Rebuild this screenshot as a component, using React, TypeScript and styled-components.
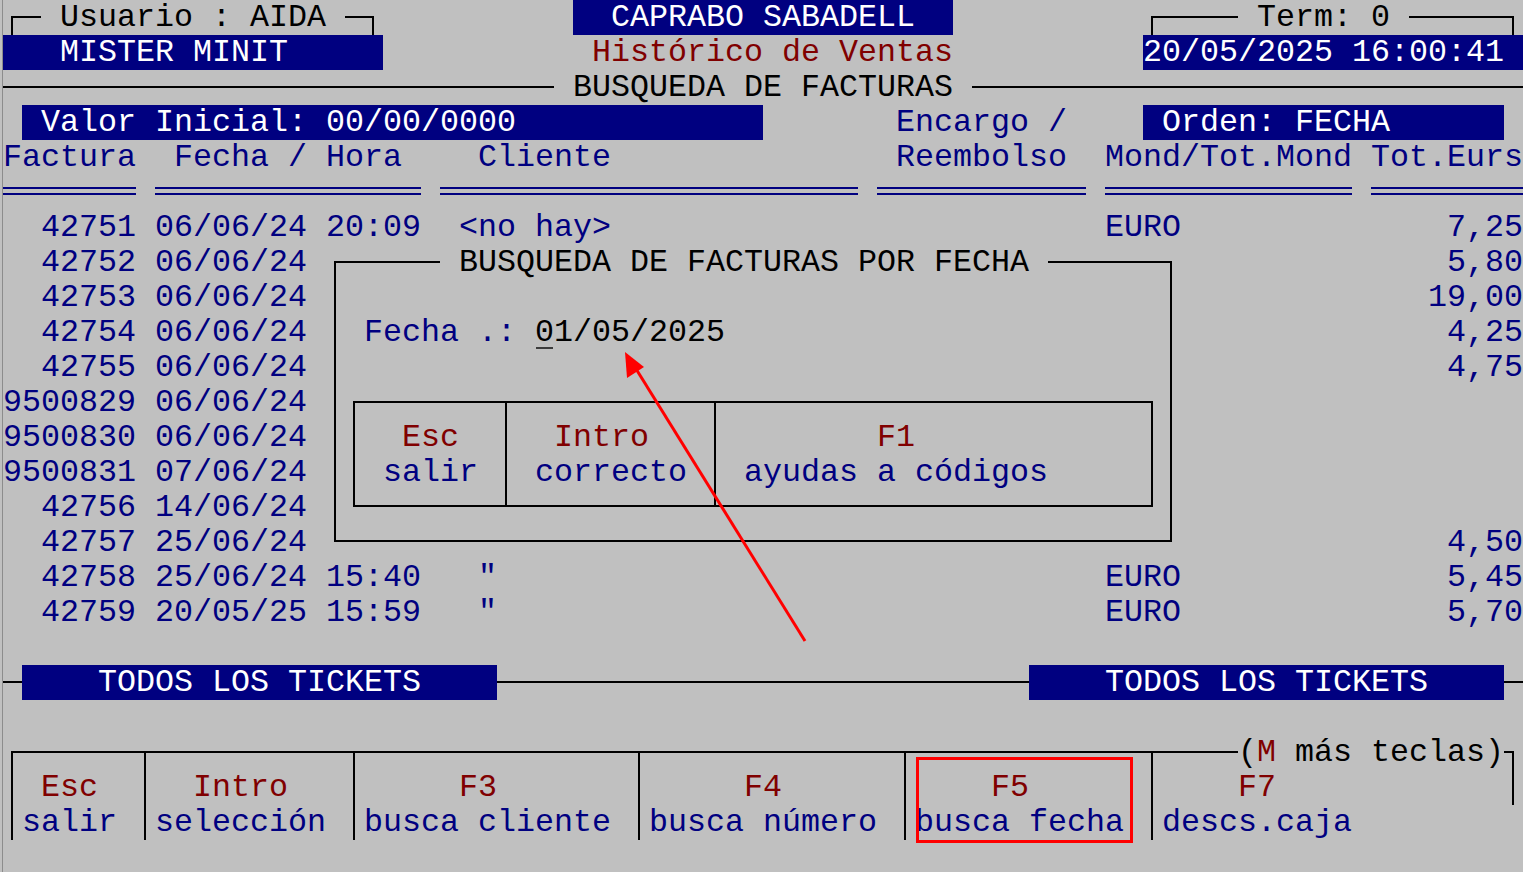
import React from "react";
import styled, { createGlobalStyle, css } from "styled-components";

const BLUE = "#000080";
const RED = "#800000";
const GRAY = "#c0c0c0";
const INK = "#000000";

type Tone = "blue" | "red" | "black" | "white";
const toneColor: Record<Tone, string> = {
  blue: BLUE,
  red: RED,
  black: INK,
  white: "#ffffff",
};

const Global = createGlobalStyle`
  html, body { margin: 0; padding: 0; background: ${GRAY}; }
  #root { width: 1523px; height: 872px; overflow: hidden; }
`;

type Place = { $c: number; $r: number; $w?: number; $h?: number };

const place = css<Place>`
  grid-column: ${(p) => p.$c + 1} / span ${(p) => p.$w ?? 1};
  grid-row: ${(p) => p.$r + 1} / span ${(p) => p.$h ?? 1};
`;

const cellGrid = (cols: number, rows: number) => css`
  display: grid;
  grid-template-columns: repeat(${cols}, 19px);
  grid-template-rows: repeat(${rows}, 35px);
`;

const cellText = css`
  box-sizing: border-box;
  height: 35px;
  padding-top: 1px;
  line-height: 35px;
  white-space: pre;
`;

const Screen = styled.div`
  ${cellGrid(80, 25)};
  position: relative;
  width: 1523px;
  height: 872px;
  padding-left: 3px;
  box-sizing: border-box;
  background: ${GRAY};
  overflow: hidden;
  font-family: "Liberation Mono", "DejaVu Sans Mono", monospace;
  font-size: 31.66px;
  line-height: 35px;
  white-space: pre;
  box-shadow: inset 2px 0 0 ${GRAY}, inset 3px 0 0 #8c8c8c;
`;

const Text = styled.div<Place & { $tone?: Tone; $align?: "left" | "right" }>`
  ${place};
  ${cellText};
  color: ${(p) => toneColor[p.$tone ?? "blue"]};
  text-align: ${(p) => p.$align ?? "left"};
  z-index: 1;
`;

const Legend = styled.div<Place & { $tone?: Tone }>`
  ${place};
  ${cellText};
  color: ${(p) => toneColor[p.$tone ?? "black"]};
  background: ${GRAY};
  z-index: 2;
`;

const Hotkey = styled.span`
  color: ${RED};
`;

const Bar = styled.div<Place>`
  ${place};
  ${cellText};
  background: ${BLUE};
  color: #ffffff;
  z-index: 2;
`;

const Rule = styled.div<Place & { $tone?: Tone }>`
  ${place};
  align-self: start;
  margin-top: 16px;
  height: 2px;
  background: ${(p) => toneColor[p.$tone ?? "black"]};
`;

const DoubleRule = styled.div<Place>`
  ${place};
  align-self: start;
  margin-top: 12px;
  height: 8px;
  box-sizing: border-box;
  border-top: 2px solid ${BLUE};
  border-bottom: 2px solid ${BLUE};
`;

const Frame = styled.div<Place & { $openBottom?: boolean; $openRight?: boolean }>`
  ${place};
  margin: 16px 9px ${(p) => (p.$openBottom ? "0" : "18px")} 8px;
  border: 2px solid ${INK};
  border-bottom-width: ${(p) => (p.$openBottom ? 0 : 2)}px;
  border-right-width: ${(p) => (p.$openRight ? 0 : 2)}px;
  box-sizing: border-box;
`;

const VLine = styled.div<Place & { $fromMid?: boolean; $toMid?: boolean }>`
  ${place};
  justify-self: start;
  width: 2px;
  margin-left: 8px;
  margin-top: ${(p) => (p.$fromMid ? 16 : 0)}px;
  margin-bottom: ${(p) => (p.$toMid ? 18 : 0)}px;
  background: ${INK};
`;

const Dialog = styled.div<Place>`
  ${place};
  ${cellGrid(45, 9)};
  background: ${GRAY};
  z-index: 3;
`;

const Cursor = styled.div<Place>`
  ${place};
  align-self: start;
  justify-self: start;
  margin-top: 32px;
  margin-left: 1px;
  width: 17px;
  height: 2px;
  background: #3c3c3c;
  z-index: 2;
`;

const KeyBar = styled.div<Place>`
  ${place};
  ${cellGrid(80, 3)};
`;

const Annotation = styled.svg`
  position: absolute;
  left: 0;
  top: 0;
  width: 1523px;
  height: 872px;
  pointer-events: none;
  z-index: 10;
`;

type Row = {
  num: string;
  date: string;
  time?: string;
  client?: string;
  clientCol?: number;
  money?: string;
  total?: string;
};

const rows: Row[] = [
  { num: "42751", date: "06/06/24", time: "20:09", client: "<no hay>", clientCol: 24, money: "EURO", total: "7,25" },
  { num: "42752", date: "06/06/24", total: "5,80" },
  { num: "42753", date: "06/06/24", total: "19,00" },
  { num: "42754", date: "06/06/24", total: "4,25" },
  { num: "42755", date: "06/06/24", total: "4,75" },
  { num: "9500829", date: "06/06/24" },
  { num: "9500830", date: "06/06/24" },
  { num: "9500831", date: "07/06/24" },
  { num: "42756", date: "14/06/24" },
  { num: "42757", date: "25/06/24", total: "4,50" },
  { num: "42758", date: "25/06/24", time: "15:40", client: "\"", clientCol: 25, money: "EURO", total: "5,45" },
  { num: "42759", date: "20/05/25", time: "15:59", client: "\"", clientCol: 25, money: "EURO", total: "5,70" },
];

const rules: [number, number][] = [
  [0, 7],
  [8, 14],
  [23, 22],
  [46, 11],
  [58, 13],
  [72, 8],
];

const keys = [
  { kc: 2, key: "Esc", dc: 1, desc: "salir" },
  { kc: 10, key: "Intro", dc: 8, desc: "selección" },
  { kc: 24, key: "F3", dc: 19, desc: "busca cliente" },
  { kc: 39, key: "F4", dc: 34, desc: "busca número" },
  { kc: 52, key: "F5", dc: 48, desc: "busca fecha" },
  { kc: 65, key: "F7", dc: 61, desc: "descs.caja" },
];

const keyDividers = [7, 18, 33, 47, 60];

export default function App() {
  return (
    <>
      <Global />
      <Screen>
        {/* rows 0-2: header */}
        <Frame $c={0} $r={0} $w={20} $openBottom />
        <Legend $c={2} $r={0} $w={16}> Usuario : AIDA </Legend>
        <Bar $c={30} $r={0} $w={20}>{"  CAPRABO SABADELL"}</Bar>
        <Frame $c={60} $r={0} $w={20} $openBottom />
        <Legend $c={65} $r={0} $w={9}> Term: 0 </Legend>

        <Bar $c={0} $r={1} $w={20}>{"   MISTER MINIT"}</Bar>
        <Text $c={31} $r={1} $w={19} $tone="red">Histórico de Ventas</Text>
        <Bar $c={60} $r={1} $w={20}>20/05/2025 16:00:41</Bar>

        <Rule $c={0} $r={2} $w={80} />
        <Legend $c={29} $r={2} $w={22}> BUSQUEDA DE FACTURAS </Legend>

        {/* rows 3-5: column headings */}
        <Bar $c={1} $r={3} $w={39}> Valor Inicial: 00/00/0000</Bar>
        <Text $c={47} $r={3} $w={10}>Encargo /</Text>
        <Bar $c={60} $r={3} $w={19}> Orden: FECHA</Bar>

        <Text $c={0} $r={4} $w={7}>Factura</Text>
        <Text $c={9} $r={4} $w={12}>Fecha / Hora</Text>
        <Text $c={25} $r={4} $w={7}>Cliente</Text>
        <Text $c={47} $r={4} $w={9}>Reembolso</Text>
        <Text $c={58} $r={4} $w={13}>Mond/Tot.Mond</Text>
        <Text $c={72} $r={4} $w={8}>Tot.Eurs</Text>

        {rules.map(([c, w]) => (
          <DoubleRule key={c} $c={c} $r={5} $w={w} />
        ))}

        {/* rows 6-17: invoices */}
        {rows.map((row, i) => {
          const r = 6 + i;
          return (
            <React.Fragment key={row.num}>
              <Text $c={0} $r={r} $w={7} $align="right">{row.num}</Text>
              <Text $c={8} $r={r} $w={8}>{row.date}</Text>
              {row.time && <Text $c={17} $r={r} $w={5}>{row.time}</Text>}
              {row.client && <Text $c={row.clientCol ?? 24} $r={r} $w={8}>{row.client}</Text>}
              {row.money && <Text $c={58} $r={r} $w={4}>{row.money}</Text>}
              {row.total && <Text $c={72} $r={r} $w={8} $align="right">{row.total}</Text>}
            </React.Fragment>
          );
        })}

        {/* popup dialog */}
        <Dialog $c={17} $r={7} $w={45} $h={9}>
          <Frame $c={0} $r={0} $w={45} $h={9} />
          <Legend $c={6} $r={0} $w={32}> BUSQUEDA DE FACTURAS POR FECHA </Legend>
          <Text $c={2} $r={2} $w={8}>Fecha .:</Text>
          <Text $c={11} $r={2} $w={10} $tone="black">01/05/2025</Text>
          <Cursor $c={11} $r={2} />

          <Frame $c={1} $r={4} $w={43} $h={4} />
          <VLine $c={9} $r={4} $h={4} $fromMid $toMid />
          <VLine $c={20} $r={4} $h={4} $fromMid $toMid />
          <Text $c={4} $r={5} $w={3} $tone="red">Esc</Text>
          <Text $c={3} $r={6} $w={5}>salir</Text>
          <Text $c={12} $r={5} $w={5} $tone="red">Intro</Text>
          <Text $c={11} $r={6} $w={8}>correcto</Text>
          <Text $c={29} $r={5} $w={2} $tone="red">F1</Text>
          <Text $c={22} $r={6} $w={16}>ayudas a códigos</Text>
        </Dialog>

        {/* row 19: filter bars */}
        <Rule $c={0} $r={19} $w={80} />
        <Bar $c={1} $r={19} $w={25}>{"    TODOS LOS TICKETS"}</Bar>
        <Bar $c={54} $r={19} $w={25}>{"    TODOS LOS TICKETS"}</Bar>

        {/* rows 21-23: function keys */}
        <KeyBar $c={0} $r={21} $w={80} $h={3}>
          <Frame $c={0} $r={0} $w={80} $h={3} $openBottom $openRight />
          <Legend $c={65} $r={0} $w={14}>
            (<Hotkey>M</Hotkey> más teclas)
          </Legend>
          <VLine $c={79} $r={0} $h={2} $fromMid />
          {keyDividers.map((c) => (
            <VLine key={c} $c={c} $r={0} $h={3} $fromMid />
          ))}
          {keys.map((k) => (
            <React.Fragment key={k.key}>
              <Text $c={k.kc} $r={1} $w={k.key.length} $tone="red">{k.key}</Text>
              <Text $c={k.dc} $r={2} $w={k.desc.length}>{k.desc}</Text>
            </React.Fragment>
          ))}
        </KeyBar>

        <Annotation viewBox="0 0 1523 872">
          <rect x={917.5} y={758.5} width={214} height={83} fill="none" stroke="#ff0000" strokeWidth={3} />
          <line x1={805} y1={641} x2={633} y2={364} stroke="#ff0000" strokeWidth={3} />
          <polygon points="625,352 627,378 644,367" fill="#ff0000" />
        </Annotation>
      </Screen>
    </>
  );
}
